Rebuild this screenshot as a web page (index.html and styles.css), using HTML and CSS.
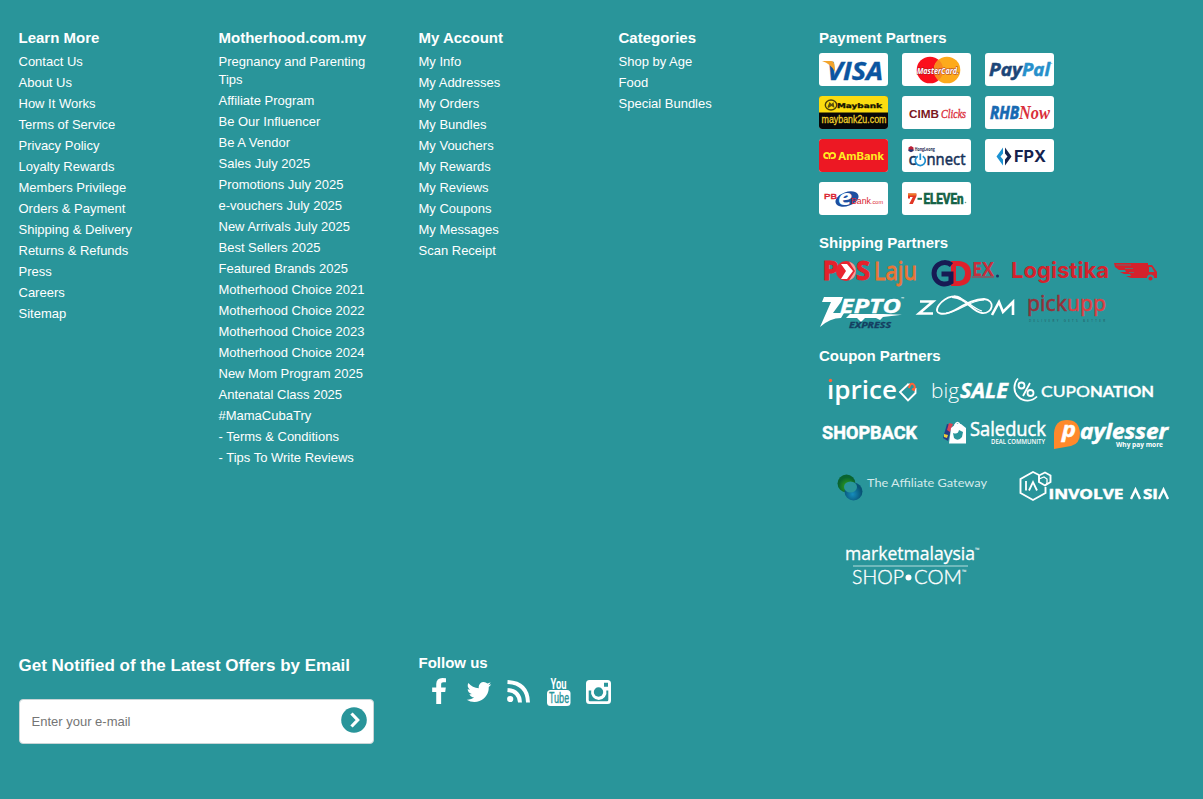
FILE: index.html
```
<!DOCTYPE html>
<html lang="en">
<head>
<meta charset="utf-8">
<title>Motherhood.com.my</title>
<link rel="stylesheet" href="styles.css">
</head>
<body>
<footer class="footer">
  <div class="columns">
    <nav class="column">
      <h3>Learn More</h3>
      <ul>
        <li>Contact Us</li><li>About Us</li><li>How It Works</li><li>Terms of Service</li><li>Privacy Policy</li><li>Loyalty Rewards</li><li>Members Privilege</li><li>Orders &amp; Payment</li><li>Shipping &amp; Delivery</li><li>Returns &amp; Refunds</li><li>Press</li><li>Careers</li><li>Sitemap</li>
      </ul>
    </nav>
    <nav class="column">
      <h3>Motherhood.com.my</h3>
      <ul>
        <li>Pregnancy and Parenting Tips</li><li>Affiliate Program</li><li>Be Our Influencer</li><li>Be A Vendor</li><li>Sales July 2025</li><li>Promotions July 2025</li><li>e-vouchers July 2025</li><li>New Arrivals July 2025</li><li>Best Sellers 2025</li><li>Featured Brands 2025</li><li>Motherhood Choice 2021</li><li>Motherhood Choice 2022</li><li>Motherhood Choice 2023</li><li>Motherhood Choice 2024</li><li>New Mom Program 2025</li><li>Antenatal Class 2025</li><li>#MamaCubaTry</li><li>- Terms &amp; Conditions</li><li>- Tips To Write Reviews</li>
      </ul>
    </nav>
    <nav class="column">
      <h3>My Account</h3>
      <ul>
        <li>My Info</li><li>My Addresses</li><li>My Orders</li><li>My Bundles</li><li>My Vouchers</li><li>My Rewards</li><li>My Reviews</li><li>My Coupons</li><li>My Messages</li><li>Scan Receipt</li>
      </ul>
    </nav>
    <nav class="column">
      <h3>Categories</h3>
      <ul>
        <li>Shop by Age</li><li>Food</li><li>Special Bundles</li>
      </ul>
    </nav>
    <div class="partners">
      <h3>Payment Partners</h3>
      <div class="cards">
        <svg class="card" viewBox="0 0 69 33">
          <text class="open heavy italic" x="8" y="26.500" font-size="25" textLength="56" lengthAdjust="spacingAndGlyphs" fill="#0b55a0" stroke="#0b55a0" stroke-width=".4">VISA</text>
          <path d="M3 8h9q3 0 3.500 4l.8 7Q12 11 3 8z" fill="#f2a32c"/>
        </svg>
        <svg class="card" viewBox="0 0 69 33">
          <circle cx="28" cy="17" r="13.300" fill="#fb0f1c"/><circle cx="45" cy="17" r="13.300" fill="#fdaa1c"/>
          <path d="M36.500 6.800a13.300 13.300 0 0 1 0 20.400a13.300 13.300 0 0 1 0-20.400z" fill="#f78a1e"/>
          <text class="open heavy italic" x="15" y="20.500" font-size="9" textLength="42" lengthAdjust="spacingAndGlyphs" fill="#fff" stroke="#a01a20" stroke-width=".8" paint-order="stroke">MasterCard.</text>
        </svg>
        <svg class="card" viewBox="0 0 69 33">
          <text class="open heavy italic" x="4" y="22.500" font-size="18" textLength="33" lengthAdjust="spacingAndGlyphs" fill="#1c4678" stroke="#1c4678" stroke-width=".5">Pay</text>
          <text class="open heavy italic" x="37" y="22.500" font-size="18" textLength="28" lengthAdjust="spacingAndGlyphs" fill="#2790cb" stroke="#2790cb" stroke-width=".5">Pal</text>
          <text class="open" x="65" y="12" font-size="3" fill="#2790cb">™</text>
        </svg>
        <svg class="card" viewBox="0 0 69 33">
          <rect width="69" height="33" rx="3" fill="#070707"/><path d="M0 16.500V3a3 3 0 0 1 3-3h63a3 3 0 0 1 3 3v13.500z" fill="#fbdc10"/>
          <ellipse cx="12" cy="9" rx="5.700" ry="5" fill="none" stroke="#4a410a" stroke-width="1.400"/><path d="M8.500 11l2-5 2 2 2-2 1 6-3-2-3 2z" fill="#5b500e"/>
          <text class="dejavu heavy" x="18" y="11.500" font-size="6.500" textLength="45" lengthAdjust="spacingAndGlyphs" fill="#151300" stroke="#151300" stroke-width=".3">Maybank</text>
          <text class="arial" x="2.500" y="26.500" font-size="11.500" textLength="65" lengthAdjust="spacingAndGlyphs" fill="#f2d22c" stroke="#f2d22c" stroke-width=".3">maybank2u.com</text>
        </svg>
        <svg class="card" viewBox="0 0 69 33">
          <text class="arial heavy" x="7" y="21.500" font-size="11.500" textLength="30" lengthAdjust="spacingAndGlyphs" fill="#7b1722">CIMB</text>
          <text class="serif italic" x="39" y="21.500" font-size="13" textLength="25" lengthAdjust="spacingAndGlyphs" fill="#dc3240" stroke="#dc3240" stroke-width=".4">Clicks</text>
        </svg>
        <svg class="card" viewBox="0 0 69 33">
          <text class="open heavy italic" x="5" y="23" font-size="18" textLength="29" lengthAdjust="spacingAndGlyphs" fill="#1769b2" stroke="#1769b2" stroke-width=".7">RHB</text>
          <text class="serif heavy italic" x="34" y="23" font-size="19" textLength="31" lengthAdjust="spacingAndGlyphs" fill="#d92f3c">Now</text>
        </svg>
        <svg class="card" viewBox="0 0 69 33">
          <rect width="69" height="33" rx="3" fill="#ed1823"/>
          <g fill="none" stroke="#ffec22" stroke-width="1.800"><path d="M9 19.200H7.800a2.700 2.700 0 1 1 2.700-2.700v3.500"/><path d="M12 19.200h1.500a2.700 2.700 0 1 0-2.700-2.700"/></g>
          <text class="inter heavy" x="19" y="20.500" font-size="10.500" textLength="46" lengthAdjust="spacingAndGlyphs" fill="#ffec22">AmBank</text>
        </svg>
        <svg class="card" viewBox="0 0 69 33">
          <path d="M6.500 8.500l2.500-1.500 2.500 1.500v3L9 13.200 6.500 11.500z" fill="#bb1f36"/><path d="M6.500 10.500h5v1.500l-2.500 1-2.500-1z" fill="#203a78"/>
          <text class="open heavy" x="12.800" y="12" font-size="4.300" textLength="20" lengthAdjust="spacingAndGlyphs" fill="#1b2a52">HongLeong</text>
          <text class="sans" x="6.500" y="26" font-size="17" textLength="8" lengthAdjust="spacingAndGlyphs" fill="#173359" stroke="#173359" stroke-width=".5">c</text>
          <path d="M15.800 17.200a5 5 0 1 0 5 0M18.300 14.500v6.500" fill="none" stroke="#1e8fd0" stroke-width="1.700"/>
          <text class="sans" x="24.500" y="26" font-size="17" textLength="39" lengthAdjust="spacingAndGlyphs" fill="#173359" stroke="#173359" stroke-width=".5">nnect</text>
        </svg>
        <svg class="card" viewBox="0 0 69 33">
          <path d="M18 8.500v6l-2.500 3 2.500 3v6l-6.500-9z" fill="#1b92d3"/><path d="M20 8.500v6l2.500 3-2.500 3v6l6.500-9z" fill="#16234e"/>
          <text class="inter heavy" x="29" y="23" font-size="15.500" textLength="32" lengthAdjust="spacingAndGlyphs" fill="#15224e">FPX</text>
        </svg>
        <svg class="card" viewBox="0 0 69 33">
          <ellipse cx="28" cy="17" rx="12" ry="7" transform="rotate(-20 28 17)" fill="#1d4fa0"/>
          <text class="arial" x="5" y="16.500" font-size="7.500" textLength="13" lengthAdjust="spacingAndGlyphs" fill="#d92331" stroke="#d92331" stroke-width=".4">PB</text>
          <text class="sans heavy italic" x="19" y="23" font-size="21" textLength="14" lengthAdjust="spacingAndGlyphs" fill="#fff">e</text>
          <text class="arial" x="32" y="22" font-size="9" textLength="20" lengthAdjust="spacingAndGlyphs" fill="#d92331">Bank</text>
          <text class="arial" x="52" y="22" font-size="6" textLength="12" lengthAdjust="spacingAndGlyphs" fill="#d92331">.com</text>
        </svg>
        <svg class="card" viewBox="0 0 69 33">
          <path d="M6 11.500h8.500v2.500l-3.700 8H7.200l3.600-7H8v1.500H6z" fill="#e13524"/><path d="M6 11.500h8v2H6z" fill="#ef7927"/>
          <path d="M15.500 15.800h4.500v2h-4.500z" fill="#177052"/>
          <text class="roboto heavy" x="21.500" y="21.500" font-size="14" textLength="40" lengthAdjust="spacingAndGlyphs" fill="#146246" stroke="#146246" stroke-width=".7">ELEVEn</text>
          <circle cx="63.500" cy="20.500" r=".8" fill="#67a28e"/>
        </svg>
      </div>

      <h3 class="shipping-title">Shipping Partners</h3>
      <div class="logos">
        <svg width="102" height="34" viewBox="819 256 102 34">
          <g class="open heavy" font-size="26" fill="#e5212b" stroke="#e5212b"><text x="822.500" y="280" textLength="16" lengthAdjust="spacingAndGlyphs">P</text><text x="856" y="280" textLength="14" lengthAdjust="spacingAndGlyphs">S</text></g>
          <circle cx="846" cy="271" r="10" fill="#e92530"/><path d="M849 261.500a10 10 0 0 1 0 19l6-9.500z" fill="#f4a19c"/><path d="M841 264h6l6 7-6 8h-6l5-8z" fill="#fff"/>
          <text class="sans" x="874" y="280" font-size="26" textLength="43" lengthAdjust="spacingAndGlyphs" fill="#e97535" stroke="#e97535" stroke-width=".8">Laju</text>
        </svg>
        <svg width="83" height="34" viewBox="921 256 83 34">
          <path fill-rule="evenodd" d="M951 261h8q12 1 12 12.500T959 286h-8zM956 266v15h3q6-1 6-7.500t-6-7.500z" fill="#df202b"/>
          <path d="M951.500 265a10.700 10.700 0 1 0-.5 17v-8h-9.500" fill="none" stroke="#171a54" stroke-width="5"/>
          <text class="open heavy" x="972" y="275.500" font-size="19" textLength="22" lengthAdjust="spacingAndGlyphs" fill="#c92d3c">EX</text><path d="M972 277h22" stroke="#c92d3c"/><circle cx="997.500" cy="276" r="1.500" fill="#1c3260"/>
        </svg>
        <svg width="180" height="34" viewBox="1004 256 180 34">
          <text class="inter heavy" x="1011" y="278" font-size="22" textLength="98" lengthAdjust="spacingAndGlyphs" fill="#d4222c">Logistika</text>
          <path d="M1114 263h34v2h4l5 7v6h-3a3.500 3.500 0 0 0-7 0h-16l-5-2h5l-1-2h-6l-4-2h6l-1-2h-6l-4-3z" fill="#d4222c"/><path d="M1149 267h2.500l3 5h-5.500z" fill="#29959a"/><circle cx="1150.500" cy="278.500" r="2" fill="#d4222c"/>
          <path d="M1116 265h15M1125 268.500h8M1129 272.500h5" stroke="#29959a" stroke-width=".6"/>
        </svg>
        <svg width="92" height="42" viewBox="819 290 92 42">
          <path d="M824 297h19l-2 5-8 11h11l-3 5q-11 0-21 9l11-25h-9zM850 314h33l19 .8-19 2.200-3 3-4-2h-11l-4 4-4-4h-11z" fill="#fff"/>
          <g class="open heavy italic" fill="#fff" stroke="#fff" stroke-width=".4"><text x="840" y="313" font-size="20" textLength="61" lengthAdjust="spacingAndGlyphs">EPTO</text></g>
          <text class="open heavy" x="901" y="300" font-size="4" fill="#fff">™</text>
          <text class="open heavy italic" x="849" y="328" font-size="8.500" textLength="42" lengthAdjust="spacingAndGlyphs" fill="#143f61" stroke="#143f61" stroke-width=".3">EXPRESS</text>
        </svg>
        <svg width="110" height="42" viewBox="911 290 110 42">
          <g fill="none" stroke="#fff" stroke-width="2.600"><path d="M920 301.500h13l-14 12h14M992 315l7-13 4 10 10-10v13"/><path d="M963 301C958 293 946 296 939 305c-7 10 5 11 16 5 11-6 19-11 29-11 12 1 9 15-2 14-10-1-15-15-30-16" stroke-width="1.800"/><path d="M954 296c11 1 17 12 28 15M946 313c12 0 23-13 38-13" stroke-width="1.200"/></g>
        </svg>
        <svg width="163" height="42" viewBox="1021 290 163 42">
          <text class="sans" x="1027" y="311" font-size="22" textLength="40" lengthAdjust="spacingAndGlyphs" fill="#94323a" stroke="#94323a" stroke-width=".5">pick</text>
          <text class="sans" x="1067" y="311" font-size="22" textLength="39" lengthAdjust="spacingAndGlyphs" fill="#df3e42" stroke="#df3e42" stroke-width=".5">upp</text>
          <text class="open" x="1029" y="322" font-size="3" textLength="76" fill="#28565c">DELIVERY GETS BETTER</text>
        </svg>
      </div>

      <h3 class="coupon-title">Coupon Partners</h3>
      <div class="logos">
        <svg width="105" height="42" viewBox="819 370 105 42">
          <text class="open semi" x="827" y="399" font-size="25" textLength="70" lengthAdjust="spacingAndGlyphs" fill="#fff">ıprice</text><circle cx="830.500" cy="380.500" r="1.700" fill="#ff6437"/>
          <path d="M908 384.500l-8 7.500 8 8.500 7.500-7.500v-5M910 384.500h-3" fill="none" stroke="#fff" stroke-width="1.900"/><path d="M909 388q1-5 4-4 3 2 1 6l-2-1" fill="none" stroke="#ff6437" stroke-width="2"/>
        </svg>
        <svg width="85" height="42" viewBox="924 370 85 42">
          <text class="open light" x="931" y="398" font-size="21" textLength="28" lengthAdjust="spacingAndGlyphs" fill="#fff">big</text><text class="open heavy italic" x="960" y="398" font-size="21" textLength="48" lengthAdjust="spacingAndGlyphs" fill="#fff" stroke="#fff" stroke-width=".4">SALE</text>
        </svg>
        <svg width="175" height="42" viewBox="1009 370 175 42">
          <g fill="none" stroke="#fff" stroke-width="1.800"><path d="M1018 378.500a12 12 0 1 0 19 18"/><circle cx="1021.500" cy="385.500" r="3"/><circle cx="1030.500" cy="393" r="3"/><path d="M1030 383l-7 13"/></g>
          <text class="lato" x="1041" y="397" font-size="15.500" textLength="49" lengthAdjust="spacingAndGlyphs" fill="#fff" stroke="#fff" stroke-width=".35">CUPO</text><text class="lato heavy" x="1090" y="397" font-size="15.500" textLength="64" lengthAdjust="spacingAndGlyphs" fill="#fff" stroke="#fff" stroke-width=".3">NATION</text>
        </svg>
        <svg width="110" height="44" viewBox="819 412 110 44">
          <text class="roboto heavy" x="822" y="439" font-size="19" textLength="95" fill="#fff" stroke="#fff" stroke-width=".5" lengthAdjust="spacingAndGlyphs">SHOPBACK</text>
        </svg>
        <svg width="120" height="44" viewBox="929 412 120 44">
          <path d="M947 424l5 1-4 16-5-3z" fill="#273b86"/><path d="M949 423l4 1-3 8-3-2z" fill="#d84455"/><path d="M944 434l4 1-1 3-3-1z" fill="#f1cf35"/><path d="M951 428l5-4h5l5 4v15.500h-17z" fill="#fff"/><path d="M955 427v-2q2.500-5 5 0v2" fill="none" stroke="#fff" stroke-width="1.700"/><path d="M953 433q5 2 6-3l4 2-1 5q-4 5-8 1z" fill="#29959a"/>
          <text class="open" x="970" y="436" font-size="20" textLength="76" lengthAdjust="spacingAndGlyphs" fill="#fff" stroke="#fff" stroke-width=".5">Saleduck</text><text class="open semi" x="991" y="444" font-size="6.500" textLength="54" lengthAdjust="spacingAndGlyphs" fill="#fff">DEAL COMMUNITY</text>
        </svg>
        <svg width="135" height="44" viewBox="1049 412 135 44">
          <path d="M1054 449v-16q1-13 13-13t13 13q0 11-9 13z" fill="#ff892b"/><text class="open heavy italic" x="1062" y="437" font-size="22" textLength="14" lengthAdjust="spacingAndGlyphs" fill="#fff" stroke="#fff" stroke-width=".5">p</text>
          <text class="open heavy italic" x="1080" y="439" font-size="21" textLength="88" lengthAdjust="spacingAndGlyphs" fill="#fff" stroke="#fff" stroke-width=".5">aylesser</text><text class="open heavy" x="1116" y="447" font-size="7.500" textLength="47" lengthAdjust="spacingAndGlyphs" fill="#fff">Why pay more</text>
        </svg>
        <svg width="190" height="60" viewBox="819 456 190 60">
          <defs><radialGradient id="green" cx=".55" cy=".65"><stop stop-color="#36a51a"/><stop offset="1" stop-color="#096430"/></radialGradient><radialGradient id="blue" cx=".45" cy=".65"><stop stop-color="#168dbd"/><stop offset="1" stop-color="#085476"/></radialGradient></defs>
          <circle cx="846.500" cy="483.500" r="9" fill="url(#green)"/><circle cx="853.500" cy="491.500" r="9" fill="url(#blue)"/><ellipse cx="850.500" cy="487" rx="6.500" ry="5.500" fill="#29959a"/>
          <text class="lato" x="867" y="487" font-size="11.500" textLength="120" lengthAdjust="spacingAndGlyphs" fill="#d4eaeb">The Affiliate Gateway</text>
        </svg>
        <svg width="175" height="60" viewBox="1009 456 175 60">
          <g fill="none" stroke="#fff" stroke-width="1.900"><path d="M1039 475l-6-3-12.500 7v14l12.500 7 12.500-7v-6"/><path d="M1045 472.500l5.500 3v6.500l-5.500 3.500-6-3.500v-6.500z"/><path d="M1039 479l5-2 3 2v4l-2 3" stroke-width="1.300"/><path d="M1026 481v9.500M1029 490.500l4-8.500 4 8.500" stroke-width="1.800"/></g>
          <g class="open heavy" font-size="14.500" fill="#fff" stroke="#fff" stroke-width=".5"><text x="1048.500" y="499" textLength="75" lengthAdjust="spacingAndGlyphs">INVOLVE</text><text x="1143" y="499" textLength="15" lengthAdjust="spacingAndGlyphs">SI</text></g>
          <path d="M1131 499l4.500-9.500 4.500 9.500M1159 499l4.500-9.500 4.500 9.500" fill="none" stroke="#fff" stroke-width="2.400"/>
        </svg>
        <svg class="market" width="190" height="60" viewBox="819 536 190 60">
          <text class="open" x="845" y="560" font-size="19" textLength="130" lengthAdjust="spacingAndGlyphs" fill="#fff" stroke="#fff" stroke-width=".3">marketmalaysia</text><text class="open" x="975" y="552" font-size="6" fill="#fff">™</text>
          <path d="M853 566h115" stroke="#b9dddd"/>
          <g class="lato light" font-size="19.500" fill="#fff" stroke="#fff" stroke-width=".35"><text x="852" y="584" textLength="52" lengthAdjust="spacingAndGlyphs">SHOP</text><text x="914" y="584" textLength="48" lengthAdjust="spacingAndGlyphs">COM</text></g><circle cx="908.500" cy="577.500" r="3" fill="#fff"/><text class="open" x="962" y="574" font-size="6" fill="#fff">™</text>
        </svg>
      </div>
    </div>
  </div>

  <div class="bottom">
    <section class="newsletter">
      <h2>Get Notified of the Latest Offers by Email</h2>
      <form class="signup">
        <input type="text" placeholder="Enter your e-mail" aria-label="E-mail">
        <svg width="26" height="26" viewBox="0 0 26 26"><circle cx="13" cy="13" r="12.800" fill="#29959a"/><path d="M10.500 6.500l6.200 6.500-6.200 6.500" fill="none" stroke="#fff" stroke-width="3.200"/></svg>
      </form>
    </section>
    <section class="follow">
      <h3>Follow us</h3>
      <svg width="200" height="34" viewBox="419 674 200 34" fill="#fff">
        <path transform="translate(424.500 678) scale(.0160 .0156)" d="M1343 12v264h-157q-86 0-116 36t-30 108v189h293l-39 296h-254v759h-306v-759h-255v-296h255v-218q0-186 104-288.500t277-102.500q147 0 228 12z"/>
        <path transform="translate(465 678) scale(.0156)" d="M1684 408q-67 98-162 167 1 14 1 42 0 130-38 259.500t-115.500 248.500-184.500 210.500-258 146-323 54.500q-271 0-496-145 35 4 78 4 225 0 401-138-105-2-188-64.500t-114-159.500q33 5 61 5 43 0 85-11-112-23-185.500-111.500t-73.500-205.500v-4q68 38 146 41-66-44-105-115t-39-154q0-88 44-163 121 149 294.500 238.500t371.500 99.500q-8-38-8-74 0-134 94.500-228.500t228.500-94.500q140 0 236 102 109-21 205-78-37 115-142 178 93-10 186-50z"/>
        <circle cx="510.200" cy="699" r="3.100"/><g fill="none" stroke="#fff" stroke-width="3.900"><path d="M507.500 690q12 1 12.500 12.500M507.500 682q20 1 20.500 20.500"/></g>
        <text class="roboto heavy" x="550.500" y="689" font-size="14" textLength="16" lengthAdjust="spacingAndGlyphs">You</text>
        <rect x="547" y="690" width="23.500" height="16" rx="3.500"/>
        <text class="roboto" x="549" y="703" font-size="14" textLength="20" lengthAdjust="spacingAndGlyphs" fill="#29959a" stroke="#29959a" stroke-width=".3">Tube</text>
        <path fill-rule="evenodd" d="M589.500 680h18a3.500 3.500 0 0 1 3.500 3.500v17a3.500 3.500 0 0 1-3.500 3.500h-18a3.500 3.500 0 0 1-3.500-3.500v-17a3.500 3.500 0 0 1 3.500-3.500zm-.8 10.500v9.500q0 1.200 1.200 1.200h17.200q1.200 0 1.200-1.200v-9.500h-2a7.700 7.700 0 1 1-15 0zM604 682.700v4h4v-4z"/>
        <circle cx="598.500" cy="692" r="7"/><circle cx="598.500" cy="692" r="4.700" fill="#29959a"/>
      </svg>
    </section>
  </div>
</footer>
</body>
</html>
```
FILE: styles.css
```
* { box-sizing: border-box; }
body { margin: 0; background: #29959a; color: #fff; font: 13px/18px "Liberation Sans", Arial, sans-serif; }
.footer { height: 799px; padding: 28px 19px 0 18.500px; overflow: hidden; }
.columns { display: grid; grid-template-columns: repeat(4, 200px) 366px; height: 625px; }
h3 { margin: 0; font-size: 15px; line-height: 20px; }
ul { list-style: none; margin: 5px 0 0; padding: 0; width: 160px; }
li { margin-bottom: 3px; }
svg { display: block; flex: none; overflow: visible; }
.partners { padding-left: .5px; }
.cards { display: grid; grid-template-columns: repeat(3, 69px); gap: 10px 14px; margin-top: 5px; }
.card { width: 69px; height: 33px; border-radius: 3px; background: #fff; }
.shipping-title { margin-top: 18px; }
.coupon-title { margin-top: 14px; }
.logos { display: flex; flex-wrap: wrap; width: 365px; margin-top: 3px; }
.coupon-title + .logos { margin-top: 4px; }
.market { margin-top: 20px; }
.bottom { display: flex; }
.newsletter { width: 400px; padding-top: 3px; }
h2 { margin: 0; font-size: 17px; line-height: 20px; }
.signup { display: flex; align-items: center; width: 355px; height: 45px; margin-top: 23px; padding: 0 6px 3px 12px; border: 1px solid #c8d4d6; border-radius: 4px; background: #fff; }
.signup input { flex: 1; min-width: 0; border: 0; padding: 2px 0 0; outline: 0; background: none; font: 13px "Liberation Sans", Arial, sans-serif; }
.signup input::placeholder { color: #757575; }
.follow svg { margin-top: 1px; }
.arial { font-family: "Liberation Sans", Arial, sans-serif; }
.serif { font-family: "Liberation Serif", serif; }
.open { font-family: "Open Sans", sans-serif; }
.sans { font-family: "Noto Sans", sans-serif; }
.dejavu { font-family: "DejaVu Sans", sans-serif; }
.inter { font-family: Inter, sans-serif; }
.lato { font-family: Lato, sans-serif; }
.roboto { font-family: Roboto, sans-serif; }
.heavy { font-weight: 700; }
.semi { font-weight: 600; }
.light { font-weight: 300; }
.italic { font-style: italic; }
```
